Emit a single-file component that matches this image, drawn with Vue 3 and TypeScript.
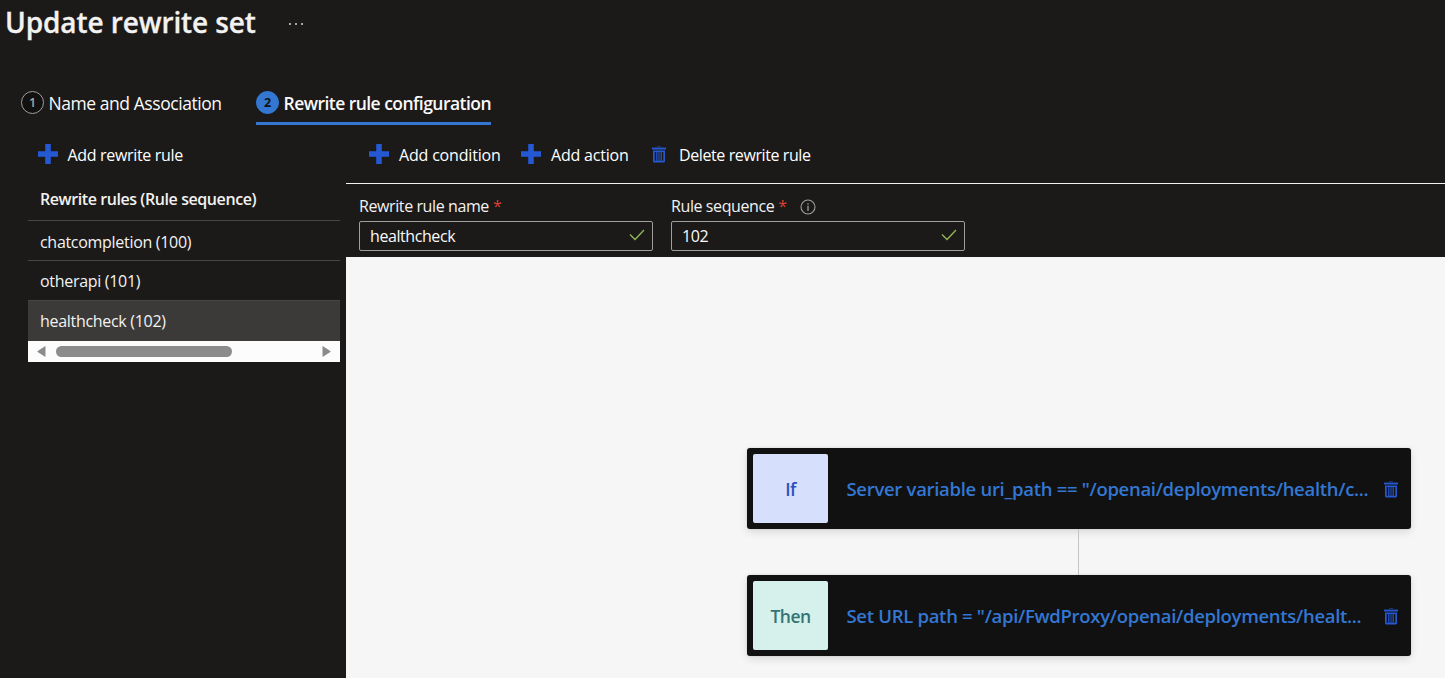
<script setup lang="ts">
import { ref } from 'vue'

interface Rule { name: string; sequence: number }
interface Block { kind: 'if' | 'then'; label: string; text: string }

const rules: Rule[] = [
  { name: 'chatcompletion', sequence: 100 },
  { name: 'otherapi', sequence: 101 },
  { name: 'healthcheck', sequence: 102 },
]
const selected = ref(102)

const blocks: Block[] = [
  { kind: 'if', label: 'If', text: 'Server variable uri_path == "/openai/deployments/health/c...' },
  { kind: 'then', label: 'Then', text: 'Set URL path = "/api/FwdProxy/openai/deployments/healt...' },
]
</script>

<template>
  <div class="page">
    <svg class="defs" width="0" height="0">
      <symbol id="plus" viewBox="0 0 20 20">
        <path d="M7.200 0h5.600v7.200H20v5.600h-7.200V20H7.200v-7.200H0V7.200h7.200z" />
      </symbol>
      <symbol id="trash" viewBox="0 0 14 17">
        <path d="M5 0h4v1.2H5z" opacity=".45" />
        <path d="M0 1.6h14v1.900H0z" />
        <path fill-rule="evenodd" d="M1 4.4h12V15q0 1.5-1.5 1.5h-9Q1 16.500 1 15zM2.700 6v8.700h1.500V6zM5.400 6v8.700h1.100V6zM7.500 6v8.700h1.100V6zM9.800 6v8.700h1.500V6z" />
      </symbol>
      <symbol id="check" viewBox="0 0 16 12">
        <path d="M1 5.500l5 5L15 1" fill="none" stroke="#92b95a" stroke-width="1.300" />
      </symbol>
    </svg>

    <header class="title-bar">
      <h1>Update rewrite set</h1>
      <span class="more"><i></i><i></i><i></i></span>
    </header>

    <nav class="tabs">
      <div class="tab">
        <span class="num">1</span><span>Name and Association</span>
      </div>
      <div class="tab active">
        <span class="num">2</span><span>Rewrite rule configuration</span>
      </div>
    </nav>

    <div class="body">
      <aside>
        <button class="cmd side-cmd"><svg class="plus"><use href="#plus" /></svg><span>Add rewrite rule</span></button>
        <div class="list-head"><span>Rewrite rules (Rule sequence)</span></div>
        <div
          v-for="r in rules" :key="r.sequence"
          class="row" :class="{ selected: r.sequence === selected }"
          @click="selected = r.sequence"
        ><span>{{ r.name }} ({{ r.sequence }})</span></div>
        <div class="scroll">
          <svg class="arrow" viewBox="0 0 9 11"><path d="M8.500 .5v10Q8.500 11 8 10.700L.7 6Q0 5.500.7 5L8 .3Q8.500 0 8.500 .5z" /></svg>
          <div class="track"><div class="thumb"></div></div>
          <svg class="arrow" viewBox="0 0 9 11"><path d="M.5 .5v10Q.5 11 1 10.700L8.300 6Q9 5.500 8.300 5L1 .3Q.5 0 .5 .5z" /></svg>
        </div>
      </aside>

      <main>
        <div class="toolbar">
          <button class="cmd c1"><svg class="plus"><use href="#plus" /></svg><span>Add condition</span></button>
          <button class="cmd c2"><svg class="plus"><use href="#plus" /></svg><span>Add action</span></button>
          <button class="cmd c3"><svg class="trash"><use href="#trash" /></svg><span>Delete rewrite rule</span></button>
        </div>
        <div class="form">
          <div class="field">
            <div class="label"><span>Rewrite rule name</span><b>*</b></div>
            <div class="input"><span>healthcheck</span><svg class="check"><use href="#check" /></svg></div>
          </div>
          <div class="field">
            <div class="label">
              <span>Rule sequence</span><b>*</b>
              <svg class="info" viewBox="0 0 16 16"><circle cx="8" cy="8" r="7" fill="none" stroke="#a19f9d" stroke-width="1.100" /><path d="M7.500 4.300h1v1.200h-1zM7.500 6.800h1V12h-1z" fill="#c8c6c4" /></svg>
            </div>
            <div class="input"><span>102</span><svg class="check"><use href="#check" /></svg></div>
          </div>
        </div>
        <div class="canvas">
          <template v-for="(b, i) in blocks" :key="b.kind">
            <div v-if="i > 0" class="connector"></div>
            <div class="card">
              <div class="tile" :class="b.kind"><span>{{ b.label }}</span></div>
              <div class="text"><span>{{ b.text }}</span></div>
              <svg class="trash"><use href="#trash" /></svg>
            </div>
          </template>
        </div>
      </main>
    </div>
  </div>
</template>

<style>
html, body { margin: 0; background: #1b1a19; overflow: hidden; }
</style>

<style scoped>
* { box-sizing: border-box; }
.page {
  width: 1445px; height: 678px; display: flex; flex-direction: column;
  background: #1b1a19; color: #faf9f8; overflow: hidden;
  font-family: "Open Sans", "Noto Sans", sans-serif; font-size: 16px; letter-spacing: -.32px; white-space: nowrap;
}
.defs { position: absolute; }
svg { flex: none; display: block; }
span { flex: none; }
.title-bar { height: 84px; display: flex; padding-left: 5px; }
h1 { width: 284px; margin: 0; font-size: 28px; line-height: 45px; font-weight: 600; letter-spacing: -.1px; color: #f3f2f1; -webkit-text-stroke: .3px #f3f2f1; }
.more { display: flex; gap: 4px; padding-top: 23px; }
.more i { width: 2px; height: 2px; background: #d8d6d4; border-radius: 1px; }

.tabs { height: 41px; display: flex; padding-left: 21px; gap: 34px; flex: none; }
.tab { display: flex; height: 41px; width: 201px; font-size: 17.5px; line-height: 39px; letter-spacing: -.44px; }
.tab.active { width: 235px; font-weight: 600; letter-spacing: -.54px; border-bottom: 3px solid #3377d3; }
.num {
  width: 23px; height: 23px; margin: 7px 4.5px 0 0; border-radius: 50%; border: 1px solid #a19f9d; letter-spacing: 0;
  background: #111; color: #a9a7a5; font-size: 12.5px; font-weight: 600; line-height: 21px; text-align: center;
}
.active .num { background: #3377d3; border-color: #3377d3; color: #111; font-weight: 700; }

.body { display: flex; flex: 1; min-height: 0; }
aside { width: 346px; padding: 0 6px 0 28px; flex: none; }
.cmd {
  display: flex; align-items: center; padding: 0; border: 0; background: none;
  font: inherit; letter-spacing: inherit; color: #fff; fill: #2459d3;
}
.plus { width: 20px; height: 20px; margin-top: -1px; }
.side-cmd { height: 59px; padding-left: 10px; gap: 9.5px; }
.list-head { height: 37px; padding-left: 12px; border-bottom: 1px solid #484644; font-weight: 600; line-height: 30px; letter-spacing: -.42px; color: #f3f2f1; }
.row { height: 40px; padding-left: 12px; line-height: 42px; letter-spacing: -.3px; color: #f3f2f1; border-bottom: 1px solid #484644; }
.row + .row { line-height: 40px; }
.row.selected { background: #3b3a39; border-color: #3b3a39; }
.scroll { height: 21px; background: #fcfcfc; display: flex; align-items: center; padding: 0 9px; gap: 10px; }
.arrow { width: 9px; height: 11px; fill: #8b8b8b; }
.track { flex: 1; }
.thumb { width: 176px; height: 11px; border-radius: 6px; background: #8b8b8b; }

main { flex: 1; display: flex; flex-direction: column; }
.toolbar { height: 59px; display: flex; padding-left: 23px; border-bottom: 1px solid #f3f2f1; }
.toolbar .cmd { height: 59px; flex: none; }
.toolbar .c1 { width: 152px; gap: 10px; letter-spacing: -.18px; }
.toolbar .c2 { width: 131px; gap: 10px; letter-spacing: -.2px; }
.toolbar .c3 { gap: 13px; letter-spacing: -.4px; }
.trash { width: 14px; height: 17px; margin-top: -1px; fill: #2459d3; }
.card .trash { margin-top: 1px; }
.form { height: 73px; padding: 10px 0 0 13px; display: flex; gap: 18px; }
.field { width: 294px; }
.label { height: 27px; display: flex; line-height: 24px; letter-spacing: -.4px; color: #f3f2f1; }
.label b { color: #dc3f33; font-weight: 400; margin-left: 4px; width: 8px; }
.info { width: 16px; height: 16px; margin: 5px 0 0 13.500px; }
.input { height: 30px; border: 1px solid #a19f9d; border-radius: 2px; display: flex; align-items: center; justify-content: space-between; padding: 0 7px 0 10px; letter-spacing: -.42px; }
.check { width: 16px; height: 12px; margin-top: -2px; }
.canvas { flex: 1; background: #f6f6f6; padding: 191px 34px 0 401px; display: flex; flex-direction: column; align-items: center; }
.card {
  width: 664px; height: 81px; flex: none; background: #111; border-radius: 3px; padding: 0 13px 0 6px;
  display: flex; align-items: center; box-shadow: 0 3px 8px rgba(0,0,0,.12), 0 0 2px rgba(0,0,0,.12);
}
.connector { width: 1px; height: 46px; margin-right: 1px; background: #c4c4c4; flex: none; }
.tile { width: 75px; height: 69px; border-radius: 2px; font-size: 17.5px; font-weight: 600; letter-spacing: -.5px; text-align: center; line-height: 70px; }
.tile.if { background: #d6dffc; color: #2b50bd; }
.tile.then { background: #d6f0eb; color: #337575; }
.text { flex: 1; padding-left: 18.5px; font-size: 18.5px; font-weight: 600; letter-spacing: -.3px; color: #3377d3; }
</style>
